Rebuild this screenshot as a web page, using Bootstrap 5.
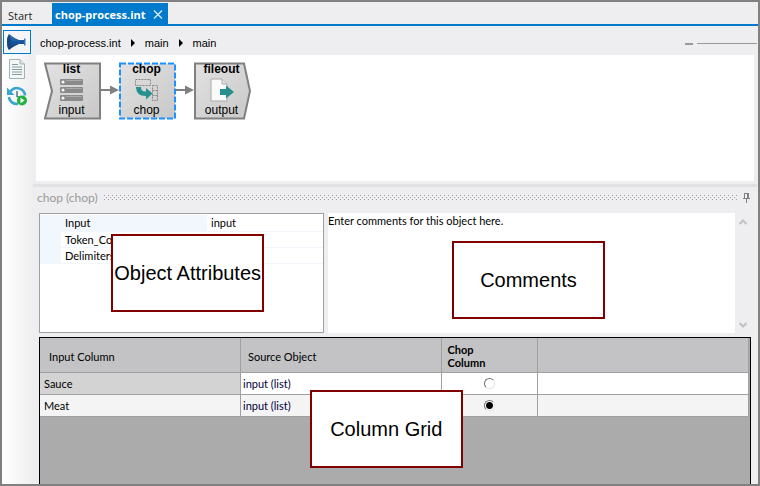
<!DOCTYPE html>
<html lang="en">
<head>
<meta charset="utf-8">
<meta name="viewport" content="width=device-width, initial-scale=1">
<title>chop-process.int</title>
<link href="https://cdn.jsdelivr.net/npm/bootstrap@5.3.0/dist/css/bootstrap.min.css" rel="stylesheet">
<style>
  body { font-family: "Liberation Sans", Arial, sans-serif; font-size: 11px; line-height: 16px; color: #000; background: #eeeef0; }
  a, a:hover { color: inherit; text-decoration: none; }
  svg { display: block; flex-shrink: 0; }
  .window { border: 2px solid #808080; background: #eeeef0; }
  .doc-tabs { border-bottom: 2px solid #007acc; padding: 1px 0 0; font-family: "Open Sans", "Segoe UI", sans-serif; font-size: 11px; }
  .doc-tabs .nav-link { height: 21px; padding: 3px 6px 0; color: #1e1e1e; line-height: 20px; white-space: nowrap; }
  .start-link { width: 50px; }
  .doc-tab { background: #007acc; color: #fff; width: 116px; height: 21px; }
  .doc-tabs .doc-tab .nav-link { color: #fff; font-weight: 700; padding: 2px 0 0 3px; }
  .side-tools { width: 31px; background: linear-gradient(90deg, #fff, #fafafa 35%, #eeeef0); padding: 4px 0 0 1px; }
  .tool { width: 28px; height: 24px; border: 1px solid transparent; background: none; padding: 0; margin-bottom: 3px; }
  .tool-on { border-color: #007acc; background: #f4f6f9; }
  .work-area { margin-right: 1px; }
  .crumbs { height: 29px; padding: 5px 0 0 7px; gap: 9px; }
  .canvas { background: #fff; height: 126px; margin: 0 3px; padding: 7px 8px; }
  .flow-node { display: grid; width: 57px; height: 58px; font-size: 12px; line-height: 14px; }
  .flow-node > * { grid-area: 1 / 1; }
  .flow-label { padding: 0 2px 3px 0; }
  .splitter { height: 3px; margin-top: 3px; background: #e1e1e4; }
  .panes { font-family: Lato, "Liberation Sans", sans-serif; }
  .pane-head { height: 26px; padding: 0 6px 5px 4px; gap: 6px; color: #999; font-size: 12px; }
  .pane-row { padding-left: 6px; gap: 4px; }
  .props { flex: 0 0 39.7%; height: 120px; border: 1px solid #a0a0a0; background: #fff; }
  .prop-table { width: 100%; line-height: 15px; margin-top: 1px; table-layout: fixed; }
  .prop-table td, .prop-table th { padding: 0 4px; font-weight: 400; border-bottom: 1px solid #f2f6fd; height: 16px; }
  .prop-table .gutter { width: 21px; background: #f2f6fd; }
  .prop-table .value { width: 41%; }
  .prop-table .picked { background: #f2f6fd; }
  .note-box { height: 120px; border: 0; border-radius: 0; padding: 0; line-height: 15px; resize: none; background: #fff; overflow: hidden; min-width: 0; }
  .scroll-rail { width: 22px; height: 120px; padding: 6px 4px 5px; }
  .scroll-rail button, .pane-head button { border: 0; background: none; padding: 0; }
  .grid-pane { border: 1px solid #000; border-bottom: 0; background: #ababab; margin: 4px 6px 0; }
  .data-grid { width: calc(100% - 1px); table-layout: fixed; }
  .data-grid th { background: #c3c3c5; height: 34px; padding: 4px 6px 0 7px; font-weight: 400; line-height: 13px; border-right: 1px solid #a0a0a0; border-bottom: 1px solid #a0a0a0; }
  .data-grid th:first-child { padding-left: 9px; }
  .data-grid th.strong-head { font-weight: 700; padding: 2px 6px 0; }
  .data-grid td { height: 22px; padding: 1px 2px 0; background: #fff; border-right: 1px solid #a0a0a0; border-bottom: 1px solid #a0a0a0; line-height: 14px; }
  .data-grid td:first-child { padding-left: 4px; }
  .data-grid .row-now td:first-child { background: #d3d3d3; }
  .data-grid .row-alt td { background: #f4f4f4; }
  .col-wide { width: 28.3%; }
  .col-slim { width: 13.6%; }
  .src { color: #000040; }
  .pick { appearance: none; display: block; width: 11px; height: 11px; margin: 0 auto; border: 1px solid; border-color: #707070 #e3e3e3 #e3e3e3 #707070; border-radius: 50%; background: #fff; }
  .pick:checked { background: radial-gradient(circle, #000 3px, #fff 4px); }
  .callout { position: absolute; width: 153px; height: 78px; border: 2px solid #800000; background: #fff; font-family: "Liberation Sans", Arial, sans-serif; font-size: 20px; white-space: nowrap; z-index: 2; }
  .callout-attrs { left: 10.8%; top: 21px; }
  .callout-notes { left: 28.9%; top: 28px; }
  .callout-grid { left: 38%; top: 52px; }
</style>
<script src="https://cdn.jsdelivr.net/npm/bootstrap@5.3.0/dist/js/bootstrap.bundle.min.js"></script>
</head>
<body>
<div class="window min-vh-100 d-flex flex-column">
  <nav class="doc-tabs d-flex">
    <a class="nav-link start-link" href="#">Start</a>
    <div class="doc-tab d-flex align-items-center">
      <a class="nav-link flex-grow-1" href="#" aria-current="page">chop-process.int</a>
      <button class="border-0 bg-transparent p-0 me-1" type="button" aria-label="Close">
        <svg width="12" height="12" viewBox="0 0 12 12"><path d="M2 2.500 10 10.500M10 2.500 2 10.500" stroke="#cfe8fa" stroke-width="1.5"/></svg>
      </button>
    </div>
  </nav>

  <div class="d-flex flex-grow-1">
    <div class="side-tools flex-shrink-0">
      <button class="tool tool-on d-flex align-items-center justify-content-center" type="button" aria-label="Design">
        <svg width="20" height="18" viewBox="0 0 20 18"><defs><linearGradient id="horn" x2="0" y2="1"><stop stop-color="#3f7cb8"/><stop offset=".5" stop-color="#17569c"/><stop offset="1" stop-color="#123a70"/></linearGradient></defs><path d="M2 1Q0 4 0 9t2 8Q7 13 12 11h5V7h-5Q7 5 2 1Z" fill="url(#horn)"/><path d="M2 1Q4 5 4 9T2 17Q0 14 0 9T2 1" fill="#17467f"/><path d="M17 5.500h1.500v7H17Z" fill="#3d76af"/></svg>
      </button>
      <button class="tool d-flex align-items-center justify-content-center" type="button" aria-label="Document">
        <svg width="18" height="20" viewBox="0 0 18 20"><path d="M1.500.5H12l4.500 4.500v14.500h-15Z" fill="#f3f7f7" stroke="#a3b3b3"/><path d="M12 .5V5h4.500" fill="#dbe5e5" stroke="#a3b3b3"/><path d="M4 5.500h6M4 8h10M4 10.500h10M4 13h10M4 15.500h10" stroke="#849c9c"/></svg>
      </button>
      <button class="tool d-flex align-items-center justify-content-center" type="button" aria-label="History">
        <svg width="20" height="20" viewBox="0 0 20 20"><path d="M3.500 5.500A8 8 0 0 1 18 9.500M1.800 11A8 8 0 0 0 11 17.800" fill="none" stroke="#3aa5cf" stroke-width="2.600"/><path d="M0 1.500v7.500h7.500Z" fill="#3aa5cf"/><path d="M10 5v5.500l3 1" fill="none" stroke="#4b7d92" stroke-width="1.500"/><circle cx="15" cy="14.500" r="5" fill="#20b43c"/><path d="M13.500 11.700v5.600l4-2.800Z" fill="#fff"/></svg>
      </button>
    </div>

    <main class="work-area flex-grow-1 d-flex flex-column">
      <div class="crumbs d-flex align-items-center">
        <a href="#">chop-process.int</a>
        <svg width="6" height="8" viewBox="0 0 6 8"><path d="M1 0 5 4 1 8Z"/></svg>
        <a href="#">main</a>
        <svg width="6" height="8" viewBox="0 0 6 8"><path d="M1 0 5 4 1 8Z"/></svg>
        <a href="#">main</a>
        <svg class="ms-auto" width="72" height="3" viewBox="0 0 72 3"><path d="M0 1h8v2H0ZM12 1h60v1H12Z" fill="#999"/></svg>
      </div>

      <div class="canvas d-flex align-items-start">
        <svg width="0" height="0" aria-hidden="true"><defs><linearGradient id="face" x2="1" y2="1"><stop stop-color="#e2e2e2"/><stop offset="1" stop-color="#c8c8c8"/></linearGradient></defs></svg>
        <div class="flow-node">
          <svg width="57" height="58" viewBox="0 0 57 58"><path d="M1 1.500h55v55H1L8 29Z" fill="url(#face)" stroke="#808080" stroke-width="2"/></svg>
          <div class="flow-label d-flex flex-column align-items-center justify-content-between">
            <b>list</b>
            <svg width="24" height="24" viewBox="0 0 24 24"><g fill="#8a8a8a"><rect y="1" width="23" height="6" rx="1"/><rect y="9" width="23" height="6" rx="1"/><rect y="17" width="23" height="6" rx="1"/></g><path d="M6 2.500h16M6 10.500h16M6 18.500h16" stroke="#aaa"/><g fill="#f5f5f5"><circle cx="3" cy="4" r="1.600"/><circle cx="3" cy="12" r="1.600"/><circle cx="3" cy="20" r="1.600"/></g></svg>
            <span>input</span>
          </div>
        </div>
        <svg width="18" height="58" viewBox="0 0 18 58"><path d="M0 27h9v-3.500l9 4.500-9 4.500V29H0Z" fill="#808080"/></svg>
        <div class="flow-node">
          <svg width="57" height="58" viewBox="0 0 57 58"><path d="M1 1.500h55v55H1Z" fill="url(#face)" stroke="#1e90ff" stroke-width="2" stroke-dasharray="6 2"/></svg>
          <div class="flow-label d-flex flex-column align-items-center justify-content-between">
            <b>chop</b>
            <svg width="24" height="24" viewBox="0 0 24 24"><path d="M.5 1.500h15v6H.5ZM17.500 7.500h5v15h-5ZM17.500 12.500h5M17.500 17.500h5" fill="none" stroke="#888" stroke-dasharray="2 1"/><path d="M1 9h5q0 5 5 4.500V10l6.500 5.500-6.500 6V18Q1 18 1 9Z" fill="#25908d"/></svg>
            <span>chop</span>
          </div>
        </div>
        <svg width="18" height="58" viewBox="0 0 18 58"><path d="M0 27h9v-3.500l9 4.500-9 4.500V29H0Z" fill="#808080"/></svg>
        <div class="flow-node">
          <svg width="57" height="58" viewBox="0 0 57 58"><path d="M1 1.500h49L56 29l-6 27.500H1Z" fill="url(#face)" stroke="#808080" stroke-width="2"/></svg>
          <div class="flow-label d-flex flex-column align-items-center justify-content-between">
            <b>fileout</b>
            <svg width="24" height="24" viewBox="0 0 24 24"><path d="M1 1h11l5 5v17H1Z" fill="#fafafa" stroke="#aaa"/><path d="M12 1v5h5" fill="#e5e5e5" stroke="#aaa"/><path d="M10 11h6V7.500l8 6.500-8 6.500V17h-6Z" fill="#25908d"/></svg>
            <span>output</span>
          </div>
        </div>
      </div>

      <div class="splitter"></div>

      <div class="panes flex-grow-1 d-flex flex-column">
        <div class="pane-head d-flex align-items-center">
          <span>chop (chop)</span>
          <svg class="flex-grow-1 flex-shrink-1" width="10" height="5"><defs><pattern id="grip" width="4" height="4" patternUnits="userSpaceOnUse"><path d="M0 0h1v1H0ZM2 2h1v1H2Z" fill="#a3a3a8"/></pattern></defs><rect width="100%" height="5" fill="url(#grip)"/></svg>
          <button type="button" aria-label="Pin pane"><svg width="8" height="10" viewBox="0 0 8 10"><path d="M1 0h5v5h1v1H4v4H3V6H0V5h1ZM2 1v4h2V1Z" fill="#808085" fill-rule="evenodd"/></svg></button>
        </div>

        <div class="pane-row d-flex position-relative">
          <section class="props" aria-label="Object attributes">
            <table class="prop-table">
              <tr><td class="gutter"></td><th class="picked" scope="row">Input</th><td class="value">input</td></tr>
              <tr><td class="gutter"></td><th scope="row">Token_Count</th><td></td></tr>
              <tr><td class="gutter"></td><th scope="row">Delimiters</th><td></td></tr>
            </table>
          </section>
          <div class="callout callout-attrs d-flex align-items-center justify-content-center">Object Attributes</div>
          <section class="flex-grow-1 d-flex position-relative" aria-label="Comments">
            <textarea class="note-box flex-grow-1" aria-label="Comments">Enter comments for this object here.</textarea>
            <div class="scroll-rail d-flex flex-column justify-content-between">
              <button type="button" aria-label="Scroll up"><svg width="8" height="6" viewBox="0 0 8 6"><path d="M.5 5 4 1.500 7.500 5" fill="none" stroke="#c1c1c1" stroke-width="2"/></svg></button>
              <button type="button" aria-label="Scroll down"><svg width="8" height="6" viewBox="0 0 8 6"><path d="M.5 1 4 4.500 7.500 1" fill="none" stroke="#c1c1c1" stroke-width="2"/></svg></button>
            </div>
            <div class="callout callout-notes d-flex align-items-center justify-content-center">Comments</div>
          </section>
        </div>

        <section class="grid-pane flex-grow-1 position-relative" aria-label="Column grid">
          <table class="data-grid">
            <colgroup><col class="col-wide"><col class="col-wide"><col class="col-slim"><col></colgroup>
            <thead><tr><th scope="col">Input Column</th><th scope="col">Source Object</th><th class="strong-head" scope="col">Chop<br>Column</th><th></th></tr></thead>
            <tbody>
              <tr class="row-now"><td>Sauce</td><td class="src">input (list)</td><td><input class="pick" type="radio" name="chopcol" aria-label="Chop Sauce"></td><td></td></tr>
              <tr class="row-alt"><td>Meat</td><td class="src">input (list)</td><td><input class="pick" type="radio" name="chopcol" aria-label="Chop Meat" checked></td><td></td></tr>
            </tbody>
          </table>
          <div class="callout callout-grid d-flex align-items-center justify-content-center">Column Grid</div>
        </section>
      </div>
    </main>
  </div>
</div>
</body>
</html>
